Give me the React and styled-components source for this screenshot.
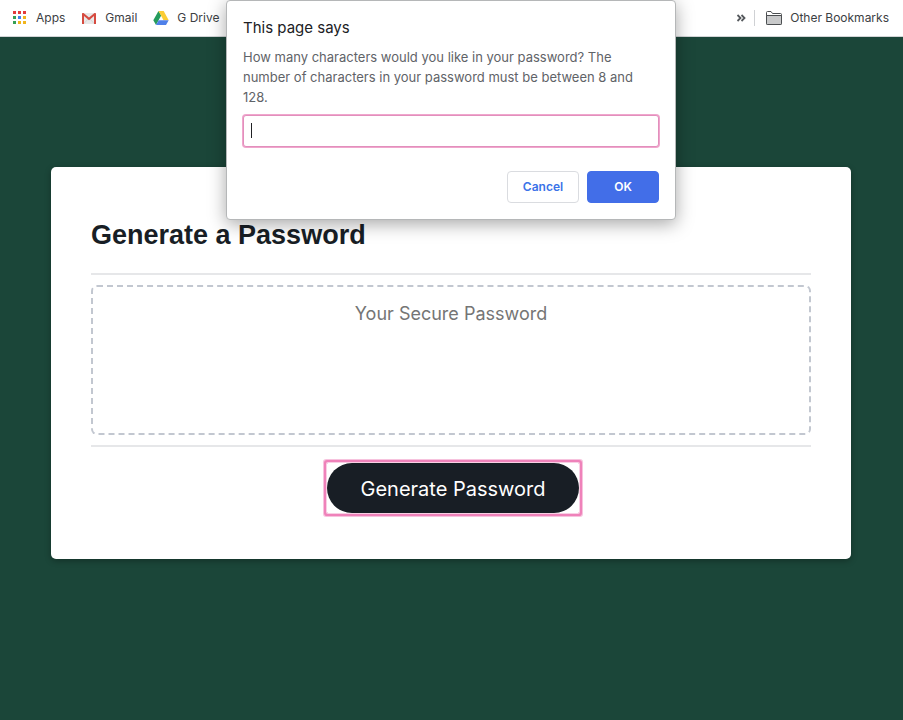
import React from "react";
import styled, { createGlobalStyle } from "styled-components";

const GlobalStyle = createGlobalStyle`
  *, *::before, *::after { box-sizing: border-box; }
  body {
    margin: 0;
    background: #1b4639;
    font-family: Inter, "Liberation Sans", sans-serif;
  }
`;

const BookmarksBar = styled.nav`
  display: flex;
  align-items: center;
  height: 37px;
  padding: 0 14px 1px 12px;
  background: #fff;
  border-bottom: 1px solid #d2d4d6;
`;

const Bookmark = styled.a`
  display: flex;
  align-items: center;
  gap: 8px;
  margin-right: 16px;
  color: #3c4043;
  font: 12px/16px Inter, sans-serif;
  text-decoration: none;
  white-space: nowrap;

  svg { flex: none; }
  &:last-child { margin-right: 0; }
`;

const MoreButton = styled.button`
  display: flex;
  margin-left: auto;
  padding: 0;
  border: 0;
  background: none;
`;

const Divider = styled.span`
  width: 1px;
  height: 16px;
  margin: 0 11px 0 8px;
  background: #cfd1d4;
`;

const Page = styled.main`
  padding: 130px 21px 130px 20px;
`;

const Card = styled.section`
  max-width: 800px;
  margin: 0 auto;
  padding: 48px 40px 46px;
  background: #fff;
  border-radius: 5px;
  box-shadow: 0 2px 6px rgba(0, 0, 0, 0.3);
`;

const CardTitle = styled.h1`
  margin: 0;
  padding-bottom: 18px;
  color: #181e25;
  font: bold 27px/40px "Liberation Sans", Arial, sans-serif;
`;

const CardBody = styled.div`
  padding: 10px 0;
  border: solid #e6e7e9;
  border-width: 2px 0;
`;

const PasswordField = styled.textarea`
  display: block;
  width: 100%;
  height: 150px;
  padding: 13px;
  border: 2px dashed #c2c7d0;
  border-radius: 6px;
  background: transparent;
  color: #181e25;
  font: 18px/28px Inter, sans-serif;
  text-align: center;
  resize: none;
  overflow: hidden;

  &::placeholder { color: #757575; opacity: 1; }
`;

const CardFooter = styled.div`
  display: flex;
  justify-content: center;
  padding: 16px 0 0 4px;
`;

const GenerateButton = styled.button`
  height: 50px;
  width: 252px;
  padding: 2px 0 0;
  border: 0;
  border-radius: 25px;
  background: #181e25;
  color: #fff;
  font: 20px/26px Inter, sans-serif;
  white-space: nowrap;
  outline: 0;
`;

const FocusRing = styled.span`
  display: flex;
  border-radius: 1px;
  box-shadow: 0 0 0 1px #f8cfe4, 0 0 0 3px #ef82ba, 0 0 0 4px #f7c3de;
`;

const DialogLayer = styled.div`
  position: absolute;
  top: 0;
  left: 0;
  right: 1px;
  display: flex;
  justify-content: center;
`;

const Dialog = styled.form`
  width: 450px;
  max-width: 100%;
  padding: 16px;
  border: 1px solid #b5b7b8;
  border-radius: 4px;
  background: #fff;
  box-shadow: 0 4px 18px rgba(0, 0, 0, 0.35);
`;

const DialogTitle = styled.h2`
  margin: 0 0 8px;
  color: #202124;
  font: 15px/22px Inter, sans-serif;
`;

const Message = styled.label`
  display: block;
  color: #5f6368;
  font: 13px/20px Inter, sans-serif;
`;

const PromptInput = styled.input`
  display: block;
  width: 100%;
  height: 32px;
  margin: 8px 0 24px;
  padding: 0 8px;
  border: 1px solid #e28fbc;
  border-radius: 3px;
  outline: 0;
  box-shadow: 0 0 0 1px #f0a6cd;
  color: #202124;
  caret-color: transparent;
  background: linear-gradient(#202124, #202124) 7px 7px / 1px 15px no-repeat #fff;
  font: 13px/20px Inter, sans-serif;
`;

const Actions = styled.div`
  display: flex;
  justify-content: flex-end;
  gap: 8px;
`;

const DialogButton = styled.button`
  width: 72px;
  height: 32px;
  padding: 0;
  border: 1px solid ${({ $primary }) => ($primary ? "#426ee8" : "#dadce0")};
  border-radius: 4px;
  background: ${({ $primary }) => ($primary ? "#426ee8" : "#fff")};
  color: ${({ $primary }) => ($primary ? "#fff" : "#3b73e8")};
  font: 600 12px/16px Inter, sans-serif;
`;

const appColors = ["#e33b3b", "#e33b3b", "#e33b3b", "#35a055", "#3f80ee", "#f1b51c", "#35a055", "#f1b51c", "#f1b51c"];

function AppsIcon() {
  return (
    <svg width="16" height="16" viewBox="0 0 16 16" aria-hidden="true">
      {appColors.map((fill, i) => (
        <rect key={i} x={1 + (i % 3) * 5} y={1 + Math.floor(i / 3) * 5} width="3" height="3" fill={fill} />
      ))}
    </svg>
  );
}

function GmailIcon() {
  return (
    <svg width="16" height="16" viewBox="0 0 16 16" aria-hidden="true">
      <path d="M2 3h12v11H2z" fill="#e9e9e9" />
      <path d="M3 13.500 7 9l1 1 1-1 4 4.500" fill="none" stroke="#d5d5d5" />
      <path d="M1 3.500Q1 3 1.800 3H2.500L8 7.500 13.500 3h.7q.8 0 .8.700V14h-2V6L8 10.200 3 6v8H1z" fill="#d64b40" />
    </svg>
  );
}

function DriveIcon() {
  return (
    <svg width="16" height="16" viewBox="0 0 16 16" aria-hidden="true">
      <path d="M5.500 1 8.200 5.500 3 15 .3 10.300z" fill="#259b5c" />
      <path d="M5.500 1h5.200l5 9.300h-5.200z" fill="#fbcd35" />
      <path d="M5.700 10.300h10L13 15H3z" fill="#4f80e9" />
    </svg>
  );
}

function FolderIcon() {
  return (
    <svg width="16" height="14" viewBox="0 0 16 14" aria-hidden="true">
      <path d="M.5 12.500v-11q0-1 1-1H5l1.500 2h8q1 0 1 1v9q0 1-1 1h-13q-1 0-1-1z" fill="#fff" stroke="#4b4e51" />
      <path d="M.5 4.500h15v8q0 1-1 1h-13q-1 0-1-1z" fill="#c8c9ca" stroke="#4b4e51" />
    </svg>
  );
}

export default function App() {
  return (
    <>
      <GlobalStyle />
      <BookmarksBar aria-label="Bookmarks">
        <Bookmark href="#apps"><AppsIcon />Apps</Bookmark>
        <Bookmark href="#gmail"><GmailIcon />Gmail</Bookmark>
        <Bookmark href="#drive"><DriveIcon />G Drive</Bookmark>
        <MoreButton type="button" aria-label="More bookmarks">
          <svg width="10" height="10" viewBox="0 0 10 10" fill="none" stroke="#55595d" strokeWidth="1.800" aria-hidden="true">
            <path d="m1.500 2 3 3-3 3M5.500 2l3 3-3 3" />
          </svg>
        </MoreButton>
        <Divider />
        <Bookmark href="#other"><FolderIcon />Other Bookmarks</Bookmark>
      </BookmarksBar>

      <Page>
        <Card>
          <CardTitle>Generate a Password</CardTitle>
          <CardBody>
            <PasswordField readOnly placeholder="Your Secure Password" aria-label="Your Secure Password" />
          </CardBody>
          <CardFooter>
            <FocusRing>
              <GenerateButton type="button">Generate Password</GenerateButton>
            </FocusRing>
          </CardFooter>
        </Card>
      </Page>

      <DialogLayer>
        <Dialog role="dialog" aria-labelledby="dialog-title" onSubmit={(e) => e.preventDefault()}>
          <DialogTitle id="dialog-title">This page says</DialogTitle>
          <Message htmlFor="length">
            How many characters would you like in your password? The number of characters in your password must be between 8 and 128.
          </Message>
          <PromptInput id="length" type="text" autoComplete="off" />
          <Actions>
            <DialogButton type="button">Cancel</DialogButton>
            <DialogButton type="submit" $primary>OK</DialogButton>
          </Actions>
        </Dialog>
      </DialogLayer>
    </>
  );
}
